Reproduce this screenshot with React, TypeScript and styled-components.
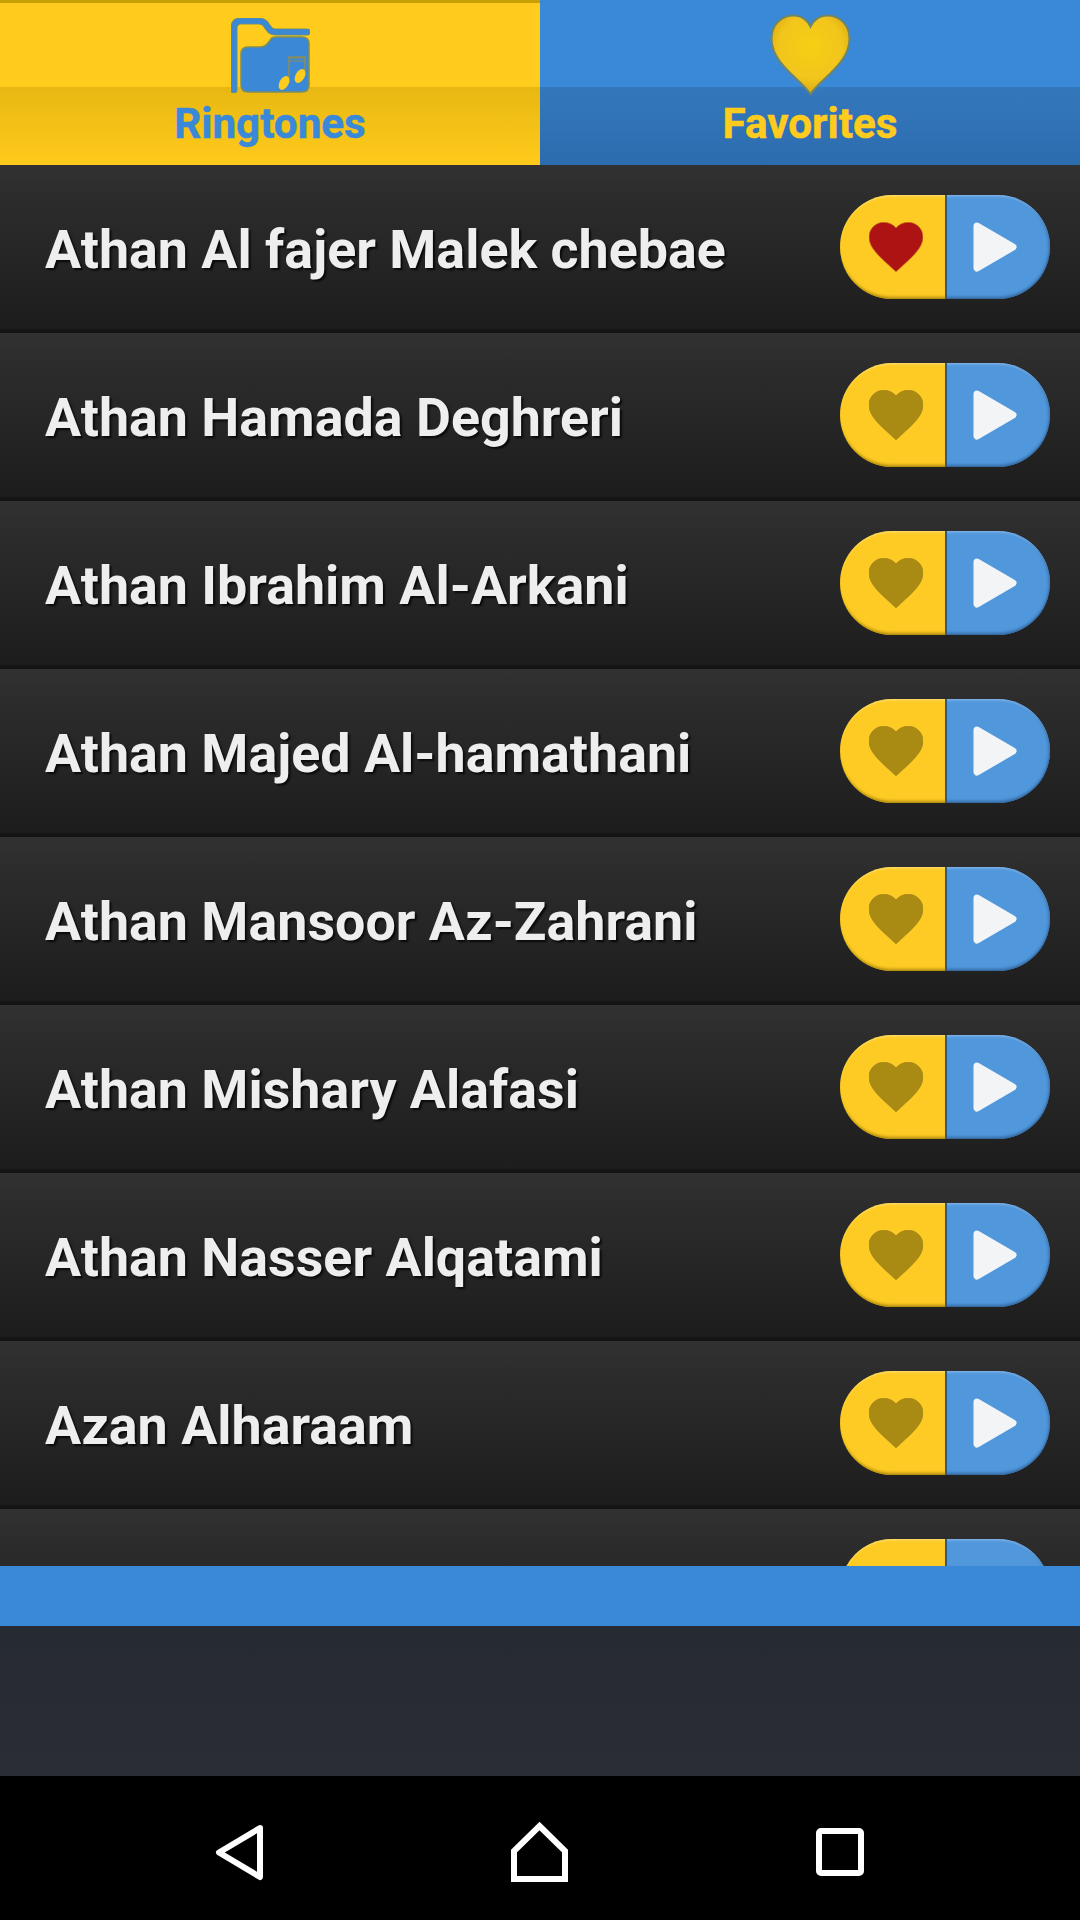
import React from 'react'
import styled, { createGlobalStyle } from 'styled-components'

const GlobalStyle = createGlobalStyle`
  html, body {
    margin: 0;
    padding: 0;
    background: #000;
  }
  body {
    font-family: Roboto, 'Liberation Sans', sans-serif;
  }
`

const Screen = styled.div`
  width: 1080px;
  height: 1920px;
  display: flex;
  flex-direction: column;
  overflow: hidden;
`

const Tabs = styled.div`
  display: flex;
  height: 165px;
  flex: none;
`

const Tab = styled.div<{ $active?: boolean }>`
  width: 540px;
  box-sizing: border-box;
  display: flex;
  flex-direction: column;
  align-items: center;
  font-size: 42.2px;
  font-weight: 700;
  color: ${props => (props.$active ? '#3a89d8' : '#ffcb1d')};
  -webkit-text-stroke: 0.5px ${props => (props.$active ? '#3a89d8' : '#ffcb1d')};
  background: ${props =>
    props.$active
      ? 'linear-gradient(180deg, #c99f06 0, #c99f06 3px, #ffcb1c 3px, #ffcb1c 87px, #e8b812 87px, #ffca1b 100%)'
      : 'linear-gradient(180deg, #3a89d8 0, #3a89d8 87px, #3478bc 87px, #2b6cae 100%)'};
`

const TabIcon = styled.div<{ $top: number }>`
  height: 103px;
  box-sizing: border-box;
  padding-top: ${props => props.$top}px;
  display: flex;
  justify-content: center;
`

const TabLabel = styled.div`
  line-height: 40px;
  margin-top: 1px;
`

const List = styled.div`
  height: 1401px;
  flex: none;
  overflow: hidden;
`

const Row = styled.div`
  height: 168px;
  box-sizing: border-box;
  display: flex;
  align-items: flex-start;
  justify-content: space-between;
  padding: 30px 30px 0 45px;
  background: linear-gradient(180deg, #313131 0, #2c2c2c 20%, #1d1d1d 97%, #131313 98.5%, #131313 100%);
`

const Title = styled.div`
  font-size: 53.8px;
  font-weight: 700;
  line-height: 104px;
  margin-top: 3px;
  color: #eeeeee;
  text-shadow: 2px 2px 2px #0a0a0a;
  white-space: nowrap;
`

const Pill = styled.div`
  width: 210px;
  height: 104px;
  display: flex;
  flex: none;
`

const PillSide = styled.div<{ $kind: 'fav' | 'play' }>`
  height: 104px;
  width: 105px;
  display: flex;
  align-items: center;
  box-sizing: border-box;
  border-radius: ${props => (props.$kind === 'fav' ? '52px 0 0 52px' : '0 52px 52px 0')};
  background: ${props => (props.$kind === 'fav' ? '#fecb24' : '#5097dc')};
  padding-left: ${props => (props.$kind === 'fav' ? 29 : 26)}px;
  box-shadow: ${props =>
    props.$kind === 'fav'
      ? 'inset 0 -4px 3px -2px #b08a10, inset 0 3px 3px -2px #ffe07a'
      : 'inset 0 -4px 3px -2px #34699f, inset 0 3px 3px -2px #8fbeec, inset -3px 0 3px -2px #34699f'};
  border-left: ${props => (props.$kind === 'play' ? '2px solid #35597a' : 'none')};
`

const Banner = styled.div`
  height: 60px;
  flex: none;
  background: #3a89d8;
`

const AdArea = styled.div`
  height: 150px;
  flex: none;
  background: linear-gradient(180deg, #262a33, #2a2d36);
`

const NavBar = styled.div`
  height: 144px;
  flex: none;
  box-sizing: border-box;
  background: #000;
  display: flex;
  align-items: center;
  gap: 247px;
  padding: 8px 0 0 214px;
`

const names = [
  'Athan Al fajer Malek chebae',
  'Athan Hamada Deghreri',
  'Athan Ibrahim Al-Arkani',
  'Athan Majed Al-hamathani',
  'Athan Mansoor Az-Zahrani',
  'Athan Mishary Alafasi',
  'Athan Nasser Alqatami',
  'Azan Alharaam',
  '',
]

const FolderIcon = () => (
  <svg width="79" height="75" viewBox="0 0 79 75">
    <path
      d="M3 72V10Q3 3 10 3H28Q33 3 36 8L39 12Q41 14 45 14H76"
      fill="none"
      stroke="#7c8f5c"
      strokeWidth="7"
      strokeLinecap="round"
    />
    <path
      d="M3 72V10Q3 3 10 3H28Q33 3 36 8L39 12Q41 14 45 14H76"
      fill="none"
      stroke="#3a88d6"
      strokeWidth="5.4"
      strokeLinecap="round"
    />
    <path
      d="M10 36Q10 29 17 29H29Q34 29 37 25L40 21Q41 19 45 19H71Q78 19 78 26V67Q78 74 71 74H17Q10 74 10 67Z"
      fill="#3a88d6"
      stroke="#7c8f5c"
      strokeWidth="1.5"
    />
    <path d="M58 65V39H74V58" fill="none" stroke="#8d8c58" strokeWidth="1.5" />
    <path d="M58 40H74M58 43H74" stroke="#8d8c58" strokeWidth="1.2" />
    <ellipse cx="53" cy="65" rx="4.5" ry="7.5" transform="rotate(30 53 65)" fill="#ffcb1c" />
    <ellipse cx="69" cy="58" rx="4.5" ry="7.5" transform="rotate(30 69 58)" fill="#ffcb1c" />
  </svg>
)

const GoldHeart = () => (
  <svg width="81" height="82" viewBox="0 0 81 82">
    <defs>
      <radialGradient id="goldHeart" cx="50%" cy="40%" r="62%">
        <stop offset="0" stopColor="#f6cf14" />
        <stop offset="0.65" stopColor="#f2c51c" />
        <stop offset="1" stopColor="#d9a50e" />
      </radialGradient>
    </defs>
    <path
      d="M40.5 80C29 64 1.5 49 1.5 25C1.5 10 12 1.5 23.5 1.5C32 1.5 38 7 40.5 12.5C43 7 49 1.5 57.5 1.5C69 1.5 79.5 10 79.5 25C79.5 49 52 64 40.5 80Z"
      fill="url(#goldHeart)"
      stroke="#6f8666"
      strokeWidth="2"
    />
  </svg>
)

const SmallHeart = ({ liked }: { liked: boolean }) => (
  <svg width="54" height="50" viewBox="2 3 20 18.35">
    <path
      d="M12 21.35l-1.45-1.32C5.4 15.36 2 12.28 2 8.5 2 5.42 4.42 3 7.5 3c1.74 0 3.41.81 4.5 2.09C13.09 3.81 14.76 3 16.5 3 19.58 3 22 5.42 22 8.5c0 3.78-3.4 6.86-8.55 11.54L12 21.35z"
      fill={liked ? '#ad1313' : '#a98a13'}
      stroke={liked ? '#c8701a' : '#97801c'}
      strokeWidth="0.25"
    />
  </svg>
)

const PlayIcon = () => (
  <svg width="46" height="54" viewBox="0 0 46 54">
    <path d="M4 6L40 27L4 48Z" fill="#f3f4f6" stroke="#f3f4f6" strokeWidth="7" strokeLinejoin="round" />
  </svg>
)

const BackIcon = () => (
  <svg width="50" height="57" viewBox="0 0 50 57" style={{ display: 'block' }}>
    <path d="M46 4L5 28.5L46 53Z" fill="none" stroke="#fff" strokeWidth="6" strokeLinejoin="round" />
  </svg>
)

const HomeIcon = () => (
  <svg width="57" height="60" viewBox="0 0 57 60" style={{ display: 'block' }}>
    <path d="M28.5 4L54 29V57H3V29Z" fill="none" stroke="#fff" strokeWidth="6" strokeLinejoin="miter" />
  </svg>
)

const RecentsIcon = () => (
  <svg width="49" height="48" viewBox="0 0 49 48" style={{ display: 'block' }}>
    <rect x="4" y="3" width="42" height="42" rx="2" fill="none" stroke="#fff" strokeWidth="6" />
  </svg>
)

export default function App() {
  return (
    <Screen>
      <GlobalStyle />
      <Tabs>
        <Tab $active>
          <TabIcon $top={18}>
            <FolderIcon />
          </TabIcon>
          <TabLabel>Ringtones</TabLabel>
        </Tab>
        <Tab>
          <TabIcon $top={14}>
            <GoldHeart />
          </TabIcon>
          <TabLabel>Favorites</TabLabel>
        </Tab>
      </Tabs>
      <List>
        {names.map((name, index) => (
          <Row key={index}>
            <Title>{name}</Title>
            <Pill>
              <PillSide $kind="fav">
                <SmallHeart liked={index === 0} />
              </PillSide>
              <PillSide $kind="play">
                <PlayIcon />
              </PillSide>
            </Pill>
          </Row>
        ))}
      </List>
      <Banner />
      <AdArea />
      <NavBar>
        <BackIcon />
        <HomeIcon />
        <RecentsIcon />
      </NavBar>
    </Screen>
  )
}
